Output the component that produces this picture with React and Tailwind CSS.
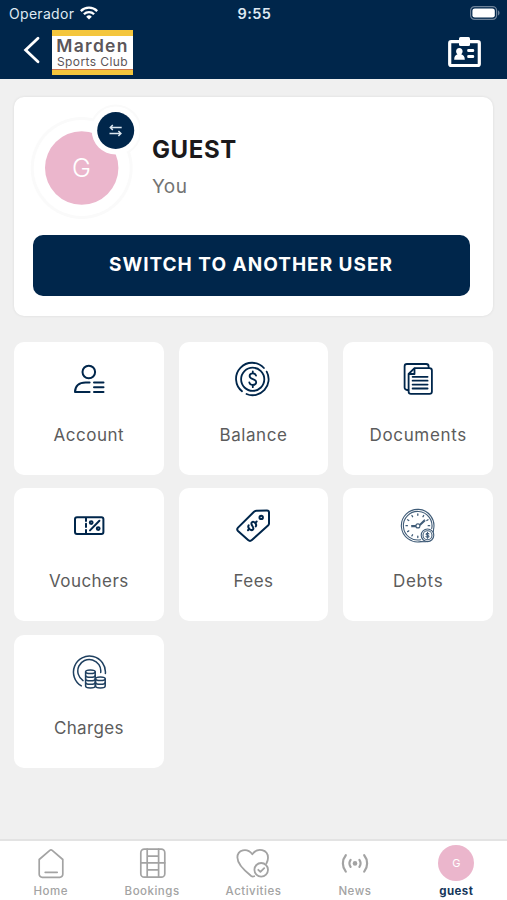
import React from "react";

const NAVY = "#00264b";

function Icon({ children, className = "h-10 w-10", box = "0 0 40 40", width = 1.8 }) {
  return (
    <svg viewBox={box} className={className} fill="none" stroke="currentColor" strokeWidth={width} strokeLinecap="round" strokeLinejoin="round">
      {children}
    </svg>
  );
}

const AccountIcon = () => (
  <Icon width={2}>
    <circle cx="19.8" cy="13" r="6.3" />
    <path d="M20.6 23.4h-4C10 23.4 6 27 6 33.1h14.600" />
    <path d="M25 23.4h9.500M25 28.2h9.500M25 33.1h9.500" />
  </Icon>
);

const BalanceIcon = () => (
  <Icon>
    <circle cx="19.7" cy="20.3" r="11.6" />
    <path d="M30.9 9A16 16 0 1 0 9 32.2M13.5 35A16 16 0 0 0 33.7 12.6" />
    <path d="M23 16.6c-.4-1.5-1.6-2.2-3.2-2.2-1.9 0-3.2 1-3.2 2.7 0 4 6.6 2 6.6 6 0 1.8-1.5 2.9-3.4 2.9-1.8 0-3.1-.9-3.5-2.6M19.8 12.4v2M19.8 26v2.2" />
  </Icon>
);

const DocumentsIcon = () => (
  <Icon>
    <path d="M30.6 8.8V7.4A2.4 2.4 0 0 0 28.2 5H9a2.4 2.4 0 0 0-2.4 2.4v21A2.4 2.4 0 0 0 9 31h1.4" />
    <path d="M16.5 9.2h15a2.4 2.4 0 0 1 2.4 2.4v20.8a2.4 2.4 0 0 1-2.4 2.4H13a2.4 2.4 0 0 1-2.4-2.4V15Z" />
    <path d="M16.5 9.6V15h-5.6" />
    <path d="M14.6 17.8h15M14.6 21.7h15M14.6 25.6h15M14.6 29.5h15" />
  </Icon>
);

const VouchersIcon = () => (
  <Icon width={2}>
    <rect x="6" y="12.2" width="28.4" height="16.8" rx="2" />
    <path d="M17 13v3M17 18.7v3.4M17 25v3" />
    <path d="m30.4 15.8-9.4 9.6" />
    <circle cx="22.2" cy="17.6" r="1.4" />
    <circle cx="29.2" cy="23.6" r="1.4" />
  </Icon>
);

const FeesIcon = () => (
  <Icon width={2}>
    <path d="M23.4 5.8 34 5.6Q36 5.6 36 7.6V18.4Q36 19.6 35 20.6L18.9 35Q17 36.7 15.1 35L5 26Q3.4 24.4 5 22.6L21 6.8Q22 5.8 23.4 5.8Z" />
    <circle cx="28.2" cy="12.4" r="1.7" />
    <g transform="rotate(45 19.4 20.8)">
      <path d="M22.2 18.800c-.4-1.400-1.500-2-2.800-2-1.700 0-2.800.8-2.800 2 0 3 5.800 1.300 5.800 4.200 0 1.400-1.300 2.100-3 2.100-1.600 0-2.700-.7-3-2M19.400 14.800v1.600M19.400 25.400v1.600" />
    </g>
  </Icon>
);

const TICKS = [0, 30, 60, 90, 180, 210, 240, 270, 300, 330];

const DebtsIcon = () => (
  <Icon width={1.1}>
    <g opacity="0.75">
      <path d="M35.6 24A16.3 16.3 0 1 0 23 36.6" />
      <path d="M33.7 23.6A14.3 14.3 0 1 0 22.6 34.7" />
      <path d="M35.6 24 35 30M23 36.6l5 .2" />
      {TICKS.map((angle) => (
        <path key={angle} d="M19.8 8.9v1.400" strokeWidth="1.3" transform={`rotate(${angle} 19.8 20.7)`} />
      ))}
      <path d="M13.6 20.6h4.2M13.6 21.8h4.2M21.8 19.4l4.6-4.6M22.4 20.2l4.6-4.4" />
      <circle cx="19.9" cy="20.9" r="2" />
      <circle cx="29.5" cy="30.3" r="6.3" fill="#fff" />
      <circle cx="29.5" cy="30.3" r="4.5" />
      <path d="M30.9 28.9c-.5-1-2.8-.9-2.8.3 0 1.3 2.9.7 2.9 2.1 0 1.3-2.5 1.3-3 .2M29.5 27.4v5.8" />
    </g>
  </Icon>
);

const ChargesIcon = () => (
  <Icon width={1.5}>
    <g opacity="0.88">
      <path d="M36.4 21.5A16 16 0 1 0 12.3 33.9M14 28.6A11.5 11.5 0 1 1 31.7 20.5" />
      <path d="M16.6 20v14c0 2.6 9.6 2.6 9.6 0V20" />
      <ellipse cx="21.4" cy="19.8" rx="4.8" ry="1.8" />
      <path d="M16.6 23.5c0 2.4 9.6 2.4 9.6 0M16.6 27c0 2.4 9.6 2.4 9.6 0M16.6 30.5c0 2.4 9.6 2.4 9.6 0" />
      <path d="M26.6 27v7c0 2.6 9.6 2.6 9.6 0v-7" />
      <ellipse cx="31.4" cy="26.8" rx="4.8" ry="1.8" />
      <path d="M26.6 30.5c0 2.4 9.6 2.4 9.6 0" />
    </g>
  </Icon>
);

const TILES = [
  ["Account", AccountIcon, "tracking-[0.5px]"],
  ["Balance", BalanceIcon, "tracking-[0.55px]"],
  ["Documents", DocumentsIcon, "tracking-[0.65px]"],
  ["Vouchers", VouchersIcon, "tracking-[0.45px]"],
  ["Fees", FeesIcon, "tracking-[0.4px]"],
  ["Debts", DebtsIcon, "tracking-[0.7px]"],
  ["Charges", ChargesIcon, "tracking-[0.35px]"],
];

function StatusBar() {
  return (
    <div className="grid h-7 grid-cols-3 items-center pr-[7px] pl-[9px] text-[#dfe9f2]">
      <div className="flex items-center gap-[6px]">
        <span className="text-[14px] leading-none tracking-[0.3px]">Operador</span>
        <svg viewBox="0 0 18 14" className="mb-[2px] h-[14px] w-[18px]" fill="none" stroke="#fff" strokeWidth="2.3">
          <path d="M.8 5.1a11.6 11.6 0 0 1 16.4 0M3.9 8.3a7.2 7.2 0 0 1 10.2 0" />
          <path d="M9 13.6 6.2 10.7a4 4 0 0 1 5.6 0Z" fill="#fff" stroke="none" />
        </svg>
      </div>
      <span className="text-center text-[14.5px] leading-none font-semibold tracking-[0.4px]">9:55</span>
      <svg viewBox="0 0 30 14" className="mb-[2px] h-[14px] w-[30px] justify-self-end">
        <rect x=".6" y=".6" width="26" height="12.8" rx="4" fill="none" stroke="#6d8299" strokeWidth="1.2" />
        <rect x="2.4" y="2.4" width="22.4" height="9.2" rx="2.4" fill="#fff" />
        <path d="M28 4.6c2 .6 2 4.2 0 4.8Z" fill="#6d8299" />
      </svg>
    </div>
  );
}

function Header() {
  return (
    <header className="h-[79px] bg-[#00264b]">
      <StatusBar />
      <div className="flex items-start pt-[2px] pr-[26px] pl-[23px]">
        <svg viewBox="0 0 18 28" className="mt-[6px] h-7 w-[18px]" fill="none" stroke="#fff" strokeWidth="2.8" strokeLinecap="round">
          <path d="M15 2.2 2.6 14 15 25.8" />
        </svg>
        <div className="ml-[11px] flex h-[45px] w-[81px] flex-col border-t-[6px] border-b-[5px] border-[#f4c63d] bg-white text-center whitespace-nowrap text-[#5b5659]">
          <div className="text-[17.5px] leading-[20px] font-semibold tracking-[1.3px]">Marden</div>
          <div className="text-[12px] leading-[12px] tracking-[0.4px]">Sports Club</div>
          <div className="mt-auto h-px bg-[#cf7752]" />
        </div>
        <svg viewBox="0 0 33 31" className="mt-[7px] ml-auto h-[31px] w-[33px]" fill="#fff">
          <rect x="1.7" y="4.7" width="29.6" height="23.8" rx="1.5" fill="none" stroke="#fff" strokeWidth="3.2" />
          <rect x="11" y="0" width="11" height="9" rx="1.5" />
          <path d="M11.3 11c2 0 3.3 1.4 3.3 3.3 0 1.4-.7 2.4-1.4 3 2.2.7 3.6 2.2 3.6 5.4H6.2c0-3.200 1.200-4.700 3.300-5.400-.8-.6-1.400-1.600-1.400-3 0-1.900 1.300-3.300 3.200-3.300Z" />
          <rect x="19.200" y="12" width="7" height="3" rx="1.300" />
          <rect x="19.200" y="18" width="7" height="3" rx="1.300" />
        </svg>
      </div>
    </header>
  );
}

function ProfileCard() {
  return (
    <section className="h-[219px] rounded-[10px] bg-white px-[18px] shadow-[0_0_3px_rgba(0,0,0,0.09)]">
      <div className="flex h-[138px]">
        <svg viewBox="0 0 112 124" className="mt-[4px] -ml-[4px] h-[124px] w-[112px] shrink-0">
          <circle cx="53.700" cy="67" r="51" fill="#fafafa" />
          <circle cx="87.700" cy="29.500" r="26" fill="#fafafa" />
          <circle cx="53.700" cy="67" r="48" fill="#fff" />
          <circle cx="53.700" cy="67" r="36.700" fill="#ebb6cc" />
          <circle cx="87.700" cy="29.500" r="24" fill="#fff" />
          <circle cx="87.700" cy="29.500" r="18.500" fill={NAVY} />
          <text x="53.500" y="75.500" textAnchor="middle" fontSize="25.500" fontWeight="300" fill="#fff">G</text>
          <g fill="none" stroke="#dbe6ef" strokeWidth="1.500">
            <path d="M93.700 26.500H82.500M84.800 24l-2.500 2.500 2.500 2.500M81.500 32.500h11.400M90.400 30l2.500 2.500-2.500 2.500" />
          </g>
        </svg>
        <div className="pt-[38px] pl-[12px]">
          <h1 className="text-[24px] leading-[30px] font-bold tracking-[0.6px] text-[#1b191b]">GUEST</h1>
          <p className="mt-[11px] text-[19px] leading-[22px] tracking-[0.4px] text-[#737373]">You</p>
        </div>
      </div>
      <button className="ml-[0.5px] flex h-[61px] w-[437px] items-center justify-center rounded-[10px] bg-[#00264b] pb-px text-[19px] font-bold tracking-[1px] text-white">
        SWITCH TO ANOTHER USER
      </button>
    </section>
  );
}

const HomeIcon = () => (
  <Icon className="h-8 w-8" box="0 0 32 32" width={1.700}>
    <path d="M4.200 12.500 14.800 3.300Q16 2.300 17.200 3.300L27.800 12.500v14.800a3 3 0 0 1-3 3H7.200a3 3 0 0 1-3-3ZM10.200 25.300h12" />
  </Icon>
);

const BookingsIcon = () => (
  <Icon className="h-8 w-8" box="0 0 32 32" width={1.700}>
    <rect x="4.800" y="2.200" width="24" height="28" rx="3.500" />
    <path d="M11.200 2.200v28M22.600 2.200v28M4.800 15.800h24M11.200 9.200h11.400M11.200 22.800h11.400" />
  </Icon>
);

const ActivitiesIcon = () => (
  <Icon className="h-8 w-9" box="0 0 36 32" width={1.800}>
    <path d="M19.200 29.200Q17.600 30 16.200 29C9.500 23.800 2.400 17.500 2.400 10.600 2.400 2.800 12 .4 17.300 7.200 22.600 0 33 2.600 33 10.800c0 2.200-.5 3.600-1.500 5.400" />
    <circle cx="26.200" cy="22.800" r="6.800" />
    <path d="m23.300 22.800 2.100 2.100 3.800-3.800" />
  </Icon>
);

const NewsIcon = () => (
  <Icon className="h-8 w-8" box="0 0 32 32" width={2.200}>
    <circle cx="16" cy="16.400" r="2.300" fill="currentColor" stroke="none" />
    <path d="M11.600 12.900a6 6 0 0 0 0 7M20.400 12.900a6 6 0 0 1 0 7M6.800 8.200a13 13 0 0 0 0 16.400M25.200 8.200a13 13 0 0 1 0 16.400" />
  </Icon>
);

const TABS = [
  ["Home", HomeIcon],
  ["Bookings", BookingsIcon],
  ["Activities", ActivitiesIcon],
  ["News", NewsIcon],
];

function TabBar() {
  return (
    <nav className="grid h-[61px] shrink-0 grid-cols-5 border-t-2 border-[#e3e3e3] bg-white text-[11.500px] leading-[14px] font-medium text-[#a3a3a3]">
      {TABS.map(([label, Glyph]) => (
        <div key={label} className="flex flex-col items-center pt-[6px]">
          <Glyph />
          <span className="mt-[5px] tracking-[0.500px]">{label}</span>
        </div>
      ))}
      <div className="flex flex-col items-center pt-1">
        <div className="flex h-9 w-9 items-center justify-center rounded-full bg-[#ebb6cc] text-[11px] font-normal text-white">G</div>
        <span className="mt-[3px] font-bold tracking-[0.400px] text-[#15365a]">guest</span>
      </div>
    </nav>
  );
}

export default function App() {
  return (
    <div className="flex h-[900px] w-[507px] flex-col overflow-hidden bg-[#f0f0f0] font-['Inter','Noto_Sans',sans-serif]">
      <Header />
      <main className="flex-1 px-[14px] pt-[18px]">
        <ProfileCard />
        <div className="mt-[26px] grid grid-cols-3 gap-x-[15px] gap-y-[13.400px]">
          {TILES.map(([label, Glyph, spacing]) => (
            <div key={label} className="flex h-[133px] flex-col items-center rounded-[10px] bg-white pt-[17px] text-[#00264b]">
              <Glyph />
              <span className={`mt-[25px] text-[17px] leading-[22px] text-[#5c5c5c] ${spacing}`}>{label}</span>
            </div>
          ))}
        </div>
      </main>
      <TabBar />
    </div>
  );
}
